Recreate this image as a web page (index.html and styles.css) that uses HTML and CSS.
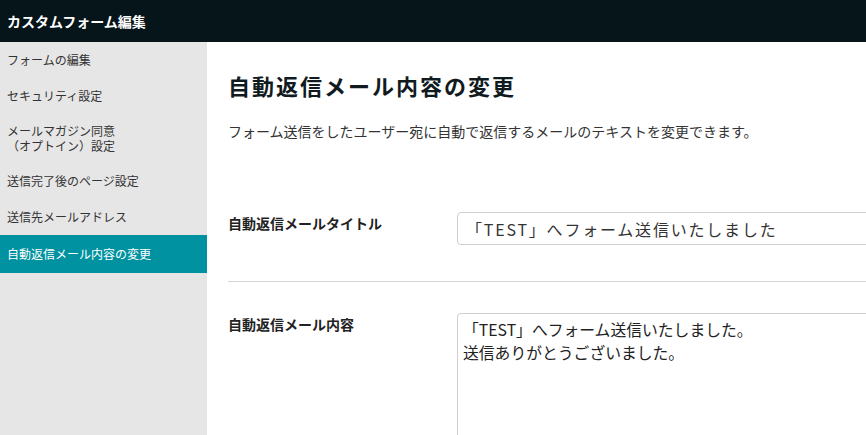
FILE: index.html
```html
<!DOCTYPE html>
<html lang="ja">

<head>
    <meta charset="UTF-8">
    <title>カスタムフォーム編集</title>
    <link rel="stylesheet" href="styles.css">
</head>

<body>

    <header class="topbar">
        <h1 class="topbar-title">カスタムフォーム編集</h1>
    </header>

    <div class="layout">
        <!-- サイドメニュー -->
        <nav class="sidebar">
            <a class="side-item" href="#">フォームの編集</a>
            <a class="side-item" href="#">セキュリティ設定</a>
            <a class="side-item multi" href="#">メールマガジン同意<br>（オプトイン）設定</a>
            <a class="side-item" href="#">送信完了後のページ設定</a>
            <a class="side-item" href="#">送信先メールアドレス</a>
            <a class="side-item active" href="#">自動返信メール内容の変更</a>
        </nav>

        <!-- メイン -->
        <main class="main">
            <h2 class="page-title">自動返信メール内容の変更</h2>
            <p class="page-desc">フォーム送信をしたユーザー宛に自動で返信するメールのテキストを変更できます。</p>

            <form id="autoreply">
                <div class="form-row with-line">
                    <label class="form-label" for="mail_title">自動返信メールタイトル</label>
                    <input type="text" id="mail_title" name="mail_title" class="text-input" value="「TEST」へフォーム送信いたしました">
                </div>

                <div class="form-row">
                    <label class="form-label" for="mail_body">自動返信メール内容</label>
                    <textarea id="mail_body" name="mail_body" class="text-area">「TEST」へフォーム送信いたしました。
送信ありがとうございました。</textarea>
                </div>
            </form>
        </main>
    </div>

</body>

</html>
```

FILE: styles.css
```css
body {
    margin: 0;
    font-family: "Noto Sans CJK JP", "Liberation Sans", sans-serif;
    color: #222;
    overflow: hidden;
}

.topbar {
    height: 42px;
    background-color: #06151a;
    display: flex;
    align-items: center;
    padding-left: 7px;
}

.topbar-title {
    margin: 0;
    font-size: 14px;
    font-weight: bold;
    color: #fff;
}

.layout {
    display: grid;
    grid-template-columns: 207px 1fr;
    min-height: calc(100vh - 42px);
}

.sidebar {
    background-color: #e6e6e6;
    display: flex;
    flex-direction: column;
}

.side-item {
    display: block;
    padding: 11px 7px;
    font-size: 12px;
    line-height: 14px;
    color: #333;
    text-decoration: none;
}

.side-item.multi {
    padding: 9px 7px 10px;
    line-height: 15px;
}

.side-item.active {
    background-color: #0092a0;
    color: #fff;
    padding: 12px 7px;
}

.main {
    padding: 27px 0 0 21px;
    min-width: 0;
}

.page-title {
    margin: 0;
    font-size: 22px;
    line-height: 32px;
    font-weight: bold;
    color: #111b1f;
    letter-spacing: 2px;
}

.page-desc {
    margin: 20px 0 0;
    font-size: 14px;
    line-height: 20px;
    color: #333;
}

#autoreply {
    margin-top: 71px;
    width: 720px;
}

.form-row {
    display: flex;
    align-items: flex-start;
}

.form-row.with-line {
    padding-bottom: 36px;
    margin-bottom: 31px;
    border-bottom: 1px solid #d5d5d5;
}

.form-label {
    width: 229px;
    flex-shrink: 0;
    padding-top: 1px;
    font-size: 14px;
    line-height: 20px;
    font-weight: bold;
    color: #222;
}

.text-input {
    flex: 1;
    height: 33px;
    box-sizing: border-box;
    padding: 0 8px;
    border: 1px solid #cfcfcf;
    border-radius: 4px;
    font-family: "Noto Sans CJK JP", "Liberation Sans", sans-serif;
    font-size: 16px;
    letter-spacing: 1.8px;
    color: #333;
}

.text-area {
    flex: 1;
    height: 220px;
    box-sizing: border-box;
    padding: 4px 5px;
    border: 1px solid #cfcfcf;
    border-radius: 4px;
    font-family: "Noto Sans CJK JP", "Liberation Sans", sans-serif;
    font-size: 15.8px;
    line-height: 23px;
    color: #222;
    resize: none;
}
```
